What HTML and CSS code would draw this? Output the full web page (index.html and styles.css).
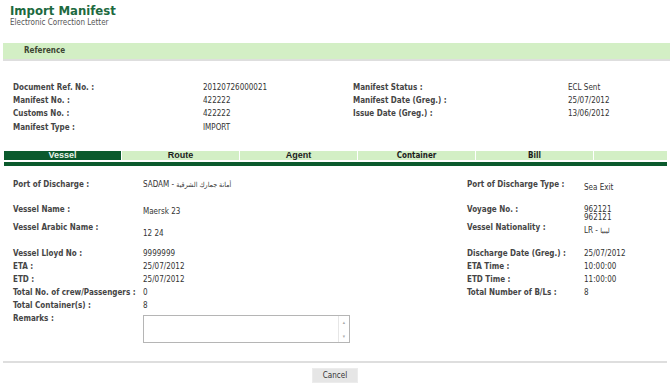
FILE: index.html
```html
<!DOCTYPE html>
<html lang="en">
<head>
    <meta charset="UTF-8">
    <title>Import Manifest</title>
    <link rel="stylesheet" href="styles.css">
</head>
<body>
    <div class="header">
        <h1>Import Manifest</h1>
        <div class="subtitle">Electronic Correction Letter</div>
    </div>

    <div class="section-bar">Reference</div>

    <table class="info ref-info">
        <tr>
            <td class="lbl">Document Ref. No. :</td>
            <td>20120726000021</td>
            <td class="lbl">Manifest Status :</td>
            <td>ECL Sent</td>
        </tr>
        <tr>
            <td class="lbl">Manifest No. :</td>
            <td>422222</td>
            <td class="lbl">Manifest Date (Greg.) :</td>
            <td>25/07/2012</td>
        </tr>
        <tr>
            <td class="lbl">Customs No. :</td>
            <td>422222</td>
            <td class="lbl">Issue Date (Greg.) :</td>
            <td>13/06/2012</td>
        </tr>
        <tr class="last">
            <td class="lbl">Manifest Type :</td>
            <td>IMPORT</td>
            <td></td>
            <td></td>
        </tr>
    </table>

    <div class="tabs">
        <div class="tab active">Vessel</div>
        <div class="tab">Route</div>
        <div class="tab">Agent</div>
        <div class="tab alt">Container</div>
        <div class="tab alt">Bill</div>
        <div class="tab filler"></div>
    </div>

    <table class="info vessel-info">
        <tr class="r1">
            <td class="lbl">Port of Discharge :</td>
            <td class="v1">SADAM - <span dir="rtl" class="ar">أمانة جمارك الشرقية</span></td>
            <td class="lbl">Port of Discharge Type :</td>
            <td class="v2">Sea Exit</td>
        </tr>
        <tr class="r2">
            <td class="lbl">Vessel Name :</td>
            <td class="v1">Maersk 23</td>
            <td class="lbl">Voyage No. :</td>
            <td class="voyage">962121<br>962121</td>
        </tr>
        <tr class="r3">
            <td class="lbl">Vessel Arabic Name :</td>
            <td class="v3">12 24</td>
            <td class="lbl">Vessel Nationality :</td>
            <td class="v2">LR - <span dir="rtl" class="ar">ليبيا</span></td>
        </tr>
        <tr>
            <td class="lbl">Vessel Lloyd No :</td>
            <td>9999999</td>
            <td class="lbl">Discharge Date (Greg.) :</td>
            <td>25/07/2012</td>
        </tr>
        <tr>
            <td class="lbl">ETA :</td>
            <td>25/07/2012</td>
            <td class="lbl">ETA Time :</td>
            <td>10:00:00</td>
        </tr>
        <tr>
            <td class="lbl">ETD :</td>
            <td>25/07/2012</td>
            <td class="lbl">ETD Time :</td>
            <td>11:00:00</td>
        </tr>
        <tr>
            <td class="lbl">Total No. of crew/Passengers :</td>
            <td>0</td>
            <td class="lbl">Total Number of B/Ls :</td>
            <td>8</td>
        </tr>
        <tr>
            <td class="lbl">Total Container(s) :</td>
            <td>8</td>
            <td></td>
            <td></td>
        </tr>
        <tr class="r-remarks">
            <td class="lbl">Remarks :</td>
            <td>
                <div class="remarks">
                    <div class="scroll">
                        <span>&#9652;</span>
                        <span>&#9662;</span>
                    </div>
                </div>
            </td>
            <td></td>
            <td></td>
        </tr>
    </table>

    <div class="footer">
        <button class="btn">Cancel</button>
    </div>
</body>
</html>
```

FILE: styles.css
```css
body {
    margin: 0;
    padding: 0;
    background-color: #fff;
    font-family: "DejaVu Sans Condensed", "DejaVu Sans", sans-serif;
    font-size: 8px;
    color: #333;
}
.header {
    padding: 3px 0 0 10px;
    height: 43px;
    box-sizing: border-box;
}
.header h1 {
    margin: 0;
    font-size: 13px;
    line-height: 15px;
    color: #1d6a40;
}
.subtitle {
    font-size: 8px;
    line-height: 9px;
    color: #555;
}
.section-bar {
    margin-left: 3px;
    height: 16px;
    line-height: 16px;
    padding-left: 21px;
    background-color: #d3efc5;
    border-bottom: 2px solid #dedede;
    font-weight: bold;
    color: #3c4532;
}
.info {
    border-collapse: collapse;
    margin-left: 13px;
}
.info tr {
    height: 13px;
}
.info td {
    padding: 0;
    line-height: 12px;
    vertical-align: top;
    white-space: nowrap;
}
.info .lbl {
    font-weight: bold;
    color: #454545;
}
.ref-info {
    margin-top: 21px;
}
.ref-info td:nth-child(1) { width: 190px; }
.ref-info td:nth-child(2) { width: 150px; }
.ref-info td:nth-child(3) { width: 215px; }
.ref-info .last td {
    padding-top: 1px;
}
.tabs {
    display: flex;
    margin: 17px 3px 0 4px;
    border-bottom: 4px solid #0b5a2d;
    padding-bottom: 2px;
}
.tab {
    width: 117px;
    height: 9px;
    line-height: 9px;
    margin-right: 1px;
    background-color: #d3efc5;
    text-align: center;
    font-family: "Liberation Sans", Arial, sans-serif;
    font-weight: bold;
    font-size: 9px;
    color: #1c1c1c;
}
.tab.alt {
    font-family: "DejaVu Sans Condensed", "DejaVu Sans", sans-serif;
    font-size: 8px;
}
.tab.active {
    background-color: #0b5a2d;
    color: #e8f4ea;
}
.tab.filler {
    flex: 1;
    margin-right: 0;
}
.vessel-info {
    margin-top: 13px;
}
.vessel-info td:nth-child(1) { width: 130px; }
.vessel-info td:nth-child(2) { width: 324px; }
.vessel-info td:nth-child(3) { width: 117px; }
.vessel-info .r1 { height: 25px; }
.vessel-info .r2 { height: 18px; }
.vessel-info .r3 { height: 26px; }
.vessel-info .v2 { padding-top: 3px; }
.vessel-info .r2 .v1 { padding-top: 2px; }
.vessel-info .v3 { padding-top: 6px; }
.vessel-info .voyage {
    line-height: 8px;
    padding-top: 2px;
}
.ar {
    font-size: 7px;
    line-height: 8px;
}
.vessel-info .r-remarks {
    height: 30px;
}
.remarks {
    margin-top: 2px;
    width: 205px;
    height: 26px;
    border: 1px solid #b5b5b5;
    display: flex;
    justify-content: flex-end;
}
.scroll {
    width: 10px;
    border-left: 1px solid #e6e6e6;
    display: flex;
    flex-direction: column;
    justify-content: space-between;
    align-items: center;
    font-size: 5px;
    line-height: 8px;
    color: #aaa;
    padding: 2px 0;
}
.footer {
    margin: 18px 3px 0 3px;
    border-top: 2px solid #dedede;
    padding-top: 5px;
    text-align: center;
}
.btn {
    width: 46px;
    height: 15px;
    padding: 0;
    background-color: #e6e6e6;
    border: 1px solid #ececec;
    font-family: "DejaVu Sans Condensed", "DejaVu Sans", sans-serif;
    font-size: 8px;
    color: #333;
}
```
